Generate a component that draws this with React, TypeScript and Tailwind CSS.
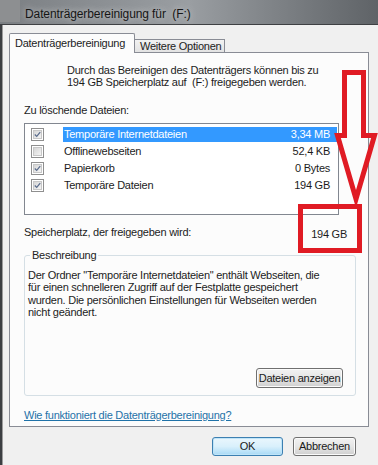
import React from 'react';

const files = [
  { name: 'Temporäre Internetdateien', size: '3,34 MB', checked: true, selected: true },
  { name: 'Offlinewebseiten', size: '52,4 KB', checked: false, selected: false },
  { name: 'Papierkorb', size: '0 Bytes', checked: true, selected: false },
  { name: 'Temporäre Dateien', size: '194 GB', checked: true, selected: false },
];

const description = [
  'Der Ordner "Temporäre Internetdateien" enthält Webseiten, die',
  'für einen schnelleren Zugriff auf der Festplatte gespeichert',
  'wurden. Die persönlichen Einstellungen für Webseiten werden',
  'nicht geändert.',
];

function CheckBox({ checked }: { checked: boolean }) {
  return (
    <div className="w-[13px] h-[13px] border border-[#8f8f8f] bg-white p-[1px] shrink-0">
      <div className="w-full h-full bg-gradient-to-br from-[#d6d6d6] to-[#f4f4f4] border border-[#c8c8c8] flex items-center justify-center">
        {checked && (
          <svg width="9" height="9" viewBox="0 0 9 9">
            <path d="M1 4.5 L3.5 7 L8 1.5" fill="none" stroke="#5a6c8c" strokeWidth="1.6" />
          </svg>
        )}
      </div>
    </div>
  );
}

function WinButton({ label, primary, className }: { label: string; primary?: boolean; className: string }) {
  return (
    <button
      className={`${className} rounded-[3px] border flex items-center justify-center text-[#1a1a1a] ${
        primary
          ? 'border-[#3c7fb1] bg-gradient-to-b from-[#eaf6fd] via-[#d9f0fc] to-[#a7d9f5] shadow-[inset_0_0_0_1px_#bfe4f8]'
          : 'border-[#707070] bg-gradient-to-b from-[#f2f2f2] via-[#e6e6e6] to-[#cfcfcf] shadow-[inset_0_0_0_1px_#fbfbfb]'
      }`}
    >
      {label}
    </button>
  );
}

export default function App() {
  return (
    <div
      className="relative w-[378px] h-[465px] overflow-hidden bg-[#f0f0f0] text-[11px] tracking-[-0.25px] text-[#1c1c1c] flex flex-col"
      style={{ fontFamily: '"Liberation Sans", Arial, sans-serif' }}
    >
      {/* title bar */}
      <div className="h-[25px] shrink-0 flex items-start bg-gradient-to-r from-[#7b7f83] via-[#9a9ea2] to-[#5f6367] border-b border-[#3e4043]">
        <div className="w-[20px] h-[22px] bg-[#8d8f91]" />
        <span className="ml-[5px] mt-[5px] text-[12px] tracking-[-0.1px] text-[#151515] [text-shadow:0_0_6px_#d8d8d8]">
          Datenträgerbereinigung für&nbsp; (F:)
        </span>
      </div>

      <div className="flex-1 flex">
        <div className="w-[3px] bg-[#3c3f42] border-r border-[#9c9c9c]" />
        <div className="flex-1 flex flex-col pl-[6px] pt-[8px]">
          {/* tabs */}
          <div className="relative z-10 h-[19px] flex items-start">
            <div className="h-[20px] w-[126px] bg-[#fcfcfc] border border-b-0 border-[#898c95] rounded-t-[2px] flex items-center pl-[5px]">
              Datenträgerbereinigung
            </div>
            <div className="mt-[6px] h-[13px] w-[90px] bg-gradient-to-b from-[#f2f2f2] to-[#e3e3e3] border border-l-0 border-b-0 border-[#898c95] flex items-center pl-[5px] text-[#222]">
              Weitere Optionen
            </div>
          </div>

          {/* panel */}
          <div className="w-[360px] h-[375px] border border-[#898c95] bg-[#fcfcfc] flex flex-col">
            <div className="ml-[57px] mt-[11px] leading-[12px]">
              <div>Durch das Bereinigen des Datenträgers können bis zu</div>
              <div>194 GB Speicherplatz auf&nbsp; (F:) freigegeben werden.</div>
            </div>

            <div className="ml-[14px] mt-[16px] leading-[12px]">Zu löschende Dateien:</div>

            <div className="ml-[14px] mt-[7px] w-[315px] h-[92px] border border-[#828790] bg-white pt-[2px] flex flex-col">
              {files.map((f) => (
                <div key={f.name} className="h-[17px] flex items-center">
                  <div className="w-[38px] pl-[6px] flex items-center">
                    <CheckBox checked={f.checked} />
                  </div>
                  <div
                    className={`flex-1 mr-[1px] h-[15px] flex items-center justify-between pl-[1px] pr-[7px] ${
                      f.selected ? 'bg-[#3399ff] text-white' : ''
                    }`}
                  >
                    <span>{f.name}</span>
                    <span>{f.size}</span>
                  </div>
                </div>
              ))}
            </div>

            <div className="ml-[14px] mt-[11px] w-[332px] flex justify-between pr-[9px] leading-[12px]">
              <span>Speicherplatz, der freigegeben wird:</span>
              <span className="mt-[2px]">194 GB</span>
            </div>

            {/* group box */}
            <div className="relative ml-[14px] mt-[15px] w-[332px] h-[141px] border border-[#d5dfe5] rounded-[3px] flex flex-col">
              <span className="absolute left-[5px] top-[-7px] px-[2px] bg-[#fcfcfc] leading-[12px] text-[#222]">
                Beschreibung
              </span>
              <div className="pl-[3px] mt-[13px] leading-[12.4px]">
                {description.map((l) => (
                  <div key={l}>{l}</div>
                ))}
              </div>
              <div className="flex-1" />
              <div className="flex justify-end pr-[12px] pb-[7px]">
                <WinButton label="Dateien anzeigen" className="w-[87px] h-[20px]" />
              </div>
            </div>

            <a className="ml-[14px] mt-[13px] leading-[12px] text-[#1f72a8] underline w-fit">
              Wie funktioniert die Datenträgerbereinigung?
            </a>
          </div>

          {/* dialog buttons */}
          <div className="mt-[10px] flex gap-[10px] pl-[203px]">
            <WinButton label="OK" primary className="w-[71px] h-[19px]" />
            <WinButton label="Abbrechen" className="w-[63px] h-[19px]" />
          </div>
        </div>
      </div>

      {/* red annotation */}
      <svg className="absolute left-0 top-0 pointer-events-none" width="378" height="465" viewBox="0 0 378 465">
        <polygon
          points="344.5,72.5 363.5,72.5 363.5,135.5 374.5,135.5 356,199 337.5,135.5 344.5,135.5"
          fill="none"
          stroke="#e01b24"
          strokeWidth="5"
          strokeLinejoin="miter"
        />
        <rect x="300.5" y="206.5" width="59" height="44" fill="none" stroke="#e01b24" strokeWidth="5" />
      </svg>
    </div>
  );
}
